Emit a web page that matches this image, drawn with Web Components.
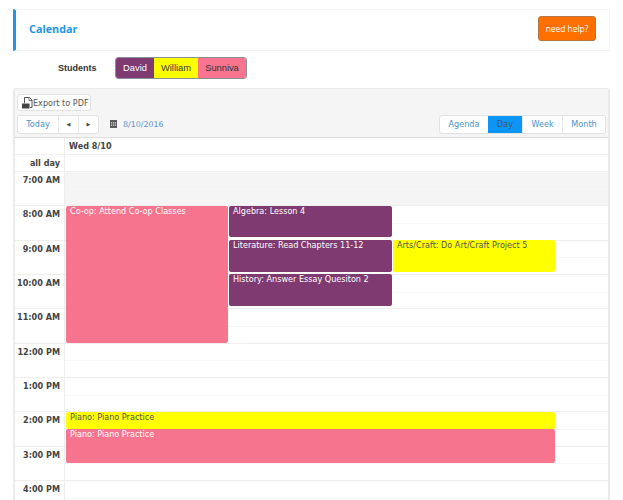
<!DOCTYPE html>
<html>
<head>
<meta charset="utf-8">
<style>
    html, body {
        margin: 0;
        height: 500px;
        overflow: hidden;
        background: #fff;
    }

    body {
        padding: 9px 13px 0;
        box-sizing: border-box;
        width: 623px;
        font-family: "DejaVu Sans", sans-serif;
        color: #333;
    }
</style>
</head>
<body>
<page-head>Calendar</page-head>
<student-picker></student-picker>
<day-calendar></day-calendar>

<script>
class PageHead extends HTMLElement {
    constructor() {
        super();
        this.attachShadow({ mode: "open" });
        this.shadowRoot.innerHTML = `
        <style>
        :host {
            display: flex;
            align-items: center;
            justify-content: space-between;
            height: 42px;
            box-sizing: border-box;
            border: 1px solid #f3f3f3;
            border-left: 3px solid #2196e3;
            padding: 0 13px 4px 13px;
        }
        h1 {
            margin: 0;
            font: bold 10.8px "Open Sans", sans-serif;
            color: #2196e3;
        }
        button {
            width: 58px;
            height: 25px;
            padding: 0;
            border: 1px solid #b5763f;
            border-radius: 3px;
            background: #ff6f00;
            color: #fff;
            font: 8.4px "Open Sans", sans-serif;
        }
        </style>
        <h1><slot></slot></h1>
        <button>need help?</button>`;
    }
}

class StudentPicker extends HTMLElement {
    constructor() {
        super();
        this.attachShadow({ mode: "open" });
        this.shadowRoot.innerHTML = `
        <style>
        :host {
            display: flex;
            align-items: center;
            height: 22px;
            margin: 6px 0 9px;
            padding-left: 45px;
        }
        b {
            width: 57px;
            font: bold 9px "Liberation Sans", sans-serif;
            color: #333;
        }
        .group {
            display: flex;
            height: 22px;
            box-sizing: border-box;
            border: 1px solid #8a8f98;
            border-radius: 3px;
            overflow: hidden;
            font: 9.3px "Liberation Sans", sans-serif;
        }
        span {
            display: flex;
            align-items: center;
            justify-content: center;
        }
        .david { width: 38px; background: #7f3a72; color: #fff; }
        .william { width: 44px; background: #ffff00; color: #333; }
        .sunniva { width: 48px; background: #f7748f; color: #333; }
        </style>
        <b>Students</b>
        <div class="group">
            <span class="david">David</span>
            <span class="william">William</span>
            <span class="sunniva">Sunniva</span>
        </div>`;
    }
}

class CalEvent extends HTMLElement {
    constructor() {
        super();
        this.attachShadow({ mode: "open" });
        this.shadowRoot.innerHTML = `
        <style>
        :host {
            position: absolute;
            box-sizing: border-box;
            padding: 0 4px;
            border-radius: 2px;
            font-size: 8.1px;
            line-height: 11px;
            white-space: nowrap;
            background: var(--bg);
            color: var(--fg);
        }
        </style>
        <slot></slot>`;
    }

    connectedCallback() {
        const a = this.getAttribute.bind(this);
        this.style.cssText = `left:${a("x")}px;top:${a("y")}px;width:${a("w")}px;height:${a("h")}px;`;
        const colors = {
            david: ["#7f3a72", "#fff"],
            william: ["#ffff00", "#555"],
            sunniva: ["#f7748f", "#fff"],
        };
        const [bg, fg] = colors[a("who")];
        this.style.setProperty("--bg", bg);
        this.style.setProperty("--fg", fg);
    }
}

class DayCalendar extends HTMLElement {
    constructor() {
        super();
        this.attachShadow({ mode: "open" });

        let rows = "";
        const hours = ["7:00 AM", "8:00 AM", "9:00 AM", "10:00 AM", "11:00 AM", "12:00 PM",
            "1:00 PM", "2:00 PM", "3:00 PM", "4:00 PM"];
        hours.forEach((h, i) => {
            rows += `<div class="hour ${i == 0 ? "off" : ""}"><div class="time">${h}</div><div class="slots"><i></i><i></i></div></div>`;
        });

        this.shadowRoot.innerHTML = `
        <style>
        :host {
            display: block;
            border: 2px solid #eaeaea;
            border-top-width: 1px;
            border-bottom: 0;
            border-radius: 3px 3px 0 0;
            font-size: 8.1px;
            white-space: nowrap;
        }
        .toolbar {
            background: #f5f5f5;
            padding: 5px 2px 4px 2px;
            height: 39px;
            border-bottom: 1px solid #ddd;
        }
        .export {
            display: inline-flex;
            align-items: center;
            height: 17px;
            width: 74px;
            box-sizing: border-box;
            padding-left: 4px;
            background: #fff;
            border: 1px solid #e2e2e2;
            border-radius: 3px;
            color: #555;
        }
        .export svg { flex: none; }
        .nav {
            display: flex;
            align-items: center;
            margin-top: 3px;
            height: 20px;
        }
        .btns {
            display: flex;
            height: 19px;
            background: #fff;
            border: 1px solid #e2e2e2;
            border-radius: 3px;
            box-sizing: border-box;
        }
        .btns span {
            display: flex;
            align-items: center;
            justify-content: center;
            box-sizing: border-box;
            color: #4a90c8;
            border-left: 1px solid #e8e8e8;
        }
        .btns span:first-child { border-left: 0; }
        .btns .on { background: #0b96f5; color: #3a5a78; border-left: 0; }
        .btns .arrow { color: #444; font-size: 5px; width: 20px; }
        .date {
            display: flex;
            align-items: center;
            gap: 6px;
            margin-left: 11px;
            font-size: 7.9px;
            color: #5b93c9;
        }
        .views { margin-left: auto; }
        .head, .allday, .hour {
            display: grid;
            grid-template-columns: 49px 1fr;
        }
        .head { height: 16px; border-bottom: 1px solid #f0f0f0; }
        .head b { grid-column: 2; padding: 3px 4px; color: #444; border-left: 1px solid #eee; }
        .allday { height: 16px; }
        .allday div + div { border-left: 1px solid #eee; }
        .time {
            text-align: right;
            padding: 3px 4px 0 0;
            font-weight: bold;
            color: #444;
        }
        .hour { height: 34.33px; border-top: 1px solid #eeeeee; box-sizing: border-box; }
        .slots { border-left: 1px solid #eee; }
        .slots i { display: block; height: 50%; box-sizing: border-box; }
        .slots i + i { border-top: 1px solid #f7f7f7; }
        .off .slots { background: #f5f5f5; }
        .grid { position: relative; }
        </style>
        <div class="toolbar">
            <div class="export">
                <svg width="11" height="12" viewBox="0 0 11 12">
                    <path d="M2.500 6V.5h5l2.500 2.500V10.500H8" fill="none" stroke="#555"/>
                    <path d="M7 .5v3h3" fill="none" stroke="#555" stroke-width=".8"/>
                    <rect x="0" y="6.500" width="7.500" height="5" fill="#444"/>
                </svg>Export to PDF
            </div>
            <div class="nav">
                <div class="btns">
                    <span style="width:40px">Today</span>
                    <span class="arrow">&#9664;</span>
                    <span class="arrow">&#9654;</span>
                </div>
                <div class="date">
                    <svg width="7" height="8" viewBox="0 0 8 9">
                        <path d="M0 0h8v9H0z" fill="#555"/>
                        <path d="M1 2.500h1.500v1.500H1zM3.300 2.500h1.500v1.500H3.300zM5.500 2.500H7v1.500H5.500zM1 5h1.500v1.500H1zM3.300 5h1.500v1.500H3.300zM5.500 5H7v1.500H5.500z" fill="#ddd"/>
                    </svg>
                    8/10/2016
                </div>
                <div class="btns views">
                    <span style="width:48px">Agenda</span>
                    <span class="on" style="width:34px">Day</span>
                    <span style="width:40px">Week</span>
                    <span style="width:43px">Month</span>
                </div>
            </div>
        </div>
        <div class="head"><b>Wed 8/10</b></div>
        <div class="allday"><div class="time">all day</div><div></div></div>
        <div class="grid">
            ${rows}
            <cal-event who="sunniva" x="51" y="35" w="162" h="137">Co-op: Attend Co-op Classes</cal-event>
            <cal-event who="david" x="214" y="35" w="163" h="31">Algebra: Lesson 4</cal-event>
            <cal-event who="david" x="214" y="69" w="163" h="32">Literature: Read Chapters 11-12</cal-event>
            <cal-event who="david" x="214" y="103" w="163" h="32">History: Answer Essay Quesiton 2</cal-event>
            <cal-event who="william" x="378" y="69" w="162" h="32">Arts/Craft: Do Art/Craft Project 5</cal-event>
            <cal-event who="william" x="51" y="241" w="489" h="17">Piano: Piano Practice</cal-event>
            <cal-event who="sunniva" x="51" y="258" w="489" h="34">Piano: Piano Practice</cal-event>
        </div>`;
    }
}

customElements.define("page-head", PageHead);
customElements.define("student-picker", StudentPicker);
customElements.define("cal-event", CalEvent);
customElements.define("day-calendar", DayCalendar);
</script>
</body>
</html>
